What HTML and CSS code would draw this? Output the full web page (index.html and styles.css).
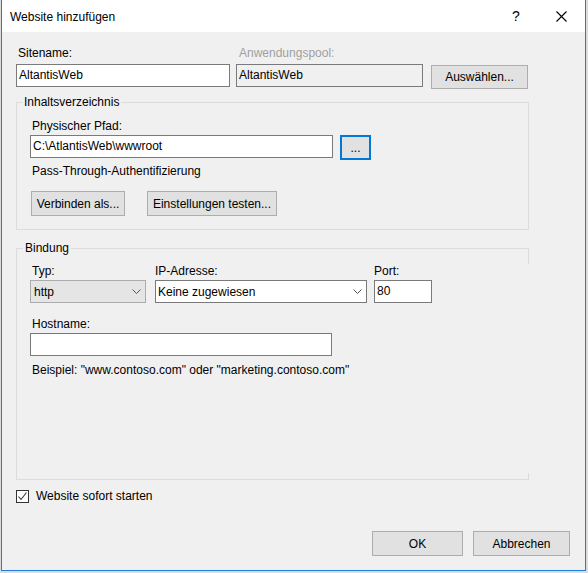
FILE: index.html
```html
<!DOCTYPE html>
<html lang="de">
<head>
<meta charset="utf-8">
<title>Website hinzufügen</title>
<link rel="stylesheet" href="styles.css">
</head>
<body>
<div class="window">
  <div class="titlebar">
    <span class="title">Website hinzufügen</span>
    <span class="help">?</span>
    <span class="close"><svg width="11" height="11" viewBox="0 0 11 11"><path d="M0.5 0.5 L10.5 10.5 M10.5 0.5 L0.5 10.5" stroke="#000" stroke-width="1.1" fill="none"/></svg></span>
  </div>
  <div class="content">
    <div class="row-top">
      <div class="field f-site">
        <label class="lbl">Sitename:</label>
        <div class="input">AltantisWeb</div>
      </div>
      <div class="field f-pool">
        <label class="lbl disabled">Anwendungspool:</label>
        <div class="input readonly">AltantisWeb</div>
      </div>
      <button class="btn b-select">Auswählen...</button>
    </div>

    <fieldset class="group g-dir">
      <legend>Inhaltsverzeichnis</legend>
      <label class="lbl">Physischer Pfad:</label>
      <div class="path-row">
        <div class="input i-path">C:\AtlantisWeb\wwwroot</div>
        <button class="btn b-dots focused">...</button>
      </div>
      <div class="lbl auth">Pass-Through-Authentifizierung</div>
      <div class="btn-row">
        <button class="btn b-connect">Verbinden als...</button>
        <button class="btn b-test">Einstellungen testen...</button>
      </div>
    </fieldset>

    <fieldset class="group g-bind">
      <legend>Bindung</legend>
      <div class="bind-row">
        <div class="field f-type">
          <label class="lbl">Typ:</label>
          <div class="select gray"><span>http</span><svg class="chev" width="9" height="5" viewBox="0 0 9 5"><path d="M0.5 0.5 L4.5 4.5 L8.5 0.5" stroke="#555" fill="none"/></svg></div>
        </div>
        <div class="field f-ip">
          <label class="lbl">IP-Adresse:</label>
          <div class="select"><span>Keine zugewiesen</span><svg class="chev" width="9" height="5" viewBox="0 0 9 5"><path d="M0.5 0.5 L4.5 4.5 L8.5 0.5" stroke="#555" fill="none"/></svg></div>
        </div>
        <div class="field f-port">
          <label class="lbl">Port:</label>
          <div class="input">80</div>
        </div>
      </div>
      <label class="lbl host-lbl">Hostname:</label>
      <div class="input i-host"></div>
      <div class="lbl example">Beispiel: "www.contoso.com" oder "marketing.contoso.com"</div>
    </fieldset>

    <div class="check-row">
      <span class="checkbox"><svg width="11" height="11" viewBox="0 0 11 11"><path d="M1.5 5.5 L4 8.5 L9.5 1.5" stroke="#333" stroke-width="1.1" fill="none"/></svg></span>
      <span class="check-label">Website sofort starten</span>
    </div>

    <div class="footer">
      <button class="btn b-ok">OK</button>
      <button class="btn b-cancel">Abbrechen</button>
    </div>
  </div>
</div>
</body>
</html>
```

FILE: styles.css
```css
html, body {
  margin: 0;
  padding: 0;
}
body {
  background: #dcdcdc;
  width: 588px;
  height: 573px;
  overflow: hidden;
  font-family: "Segoe UI", "Liberation Sans", Arial, sans-serif;
  font-size: 12px;
  color: #000;
}
.window {
  box-sizing: border-box;
  width: 585px;
  height: 571px;
  margin-left: 1px;
  border: 1px solid #1c7ed6;
  border-top: none;
  background: #f0f0f0;
  display: flex;
  flex-direction: column;
}
.titlebar {
  height: 32px;
  background: #fff;
  display: flex;
  align-items: center;
  padding-left: 8px;
  flex-shrink: 0;
}
.title {
  flex: 1;
  line-height: 16px;
  padding-top: 1px;
}
.help {
  font-size: 14px;
  width: 20px;
  margin-right: 24px;
}
.close {
  width: 11px;
  height: 11px;
  margin-right: 18px;
  display: flex;
}
.content {
  padding: 13px 0 0 14px;
}
.lbl {
  display: block;
  line-height: 16px;
  padding-left: 2px;
}
.disabled {
  color: #a0a0a0;
  padding-left: 3px;
}
.input {
  box-sizing: border-box;
  height: 23px;
  border: 1px solid #7a7a7a;
  background: #fff;
  line-height: 20px;
  padding-left: 2px;
  white-space: nowrap;
}
.input.readonly {
  background: #f0f0f0;
}
.row-top {
  display: flex;
  align-items: flex-start;
}
.row-top .lbl {
  margin-bottom: 3px;
}
.f-site { width: 214px; }
.f-pool { width: 187px; margin-left: 6px; }
.btn {
  box-sizing: border-box;
  height: 24px;
  background: #e1e1e1;
  border: 1px solid #adadad;
  font: inherit;
  color: #000;
  padding: 0;
  line-height: 20px;
}
.b-select {
  width: 97px;
  margin-left: 8px;
  margin-top: 20px;
}
.group {
  box-sizing: border-box;
  width: 513px;
  margin: 0;
  border: 1px solid #dcdcdc;
  padding: 0 0 0 13px;
}
.group legend {
  line-height: 16px;
  padding: 0 2px;
  margin-left: -8px;
}
.g-dir {
  margin-top: 5px;
  height: 136px;
  padding-top: 8px;
}
.path-row {
  display: flex;
  margin-top: 1px;
}
.i-path { width: 303px; }
.b-dots {
  width: 31px;
  height: 25px;
  margin-left: 7px;
}
.btn.focused {
  border: 2px solid #0078d7;
}
.auth {
  margin-top: 3px;
}
.btn-row {
  display: flex;
  margin-top: 12px;
}
.b-connect {
  width: 94px;
  height: 25px;
  margin-left: 1px;
}
.b-test {
  width: 130px;
  height: 25px;
  margin-left: 22px;
}
.g-bind {
  margin-top: 10px;
  height: 240px;
  padding-top: 7px;
  border-right: none;
  background:
    linear-gradient(#dcdcdc, #dcdcdc) right top / 1px 15px no-repeat,
    linear-gradient(#dcdcdc, #dcdcdc) right bottom / 1px 6px no-repeat;
}
.g-bind legend {
  margin-left: -7px;
}
.bind-row {
  display: flex;
  align-items: flex-start;
}
.bind-row .lbl {
  margin-bottom: 1px;
}
.f-type { width: 116px; }
.f-ip { width: 212px; margin-left: 9px; }
.f-port { width: 58px; margin-left: 7px; }
.f-port .lbl { padding-left: 0; }
.f-ip .lbl { padding-left: 0; }
.select {
  box-sizing: border-box;
  height: 23px;
  border: 1px solid #7a7a7a;
  background: #fff;
  display: flex;
  align-items: center;
  justify-content: space-between;
  padding: 0 4px 0 2px;
}
.select.gray {
  background: #e5e5e5;
  border-color: #acacac;
  padding-left: 3px;
}
.chev {
  display: block;
}
.host-lbl {
  margin-top: 13px;
  margin-bottom: 1px;
}
.i-host {
  width: 302px;
}
.example {
  margin-top: 6px;
}
.check-row {
  display: flex;
  align-items: center;
  margin-top: 9px;
  height: 14px;
}
.checkbox {
  box-sizing: border-box;
  width: 13px;
  height: 13px;
  border: 1px solid #333;
  background: #fff;
  display: flex;
  align-items: center;
  justify-content: center;
}
.check-label {
  margin-left: 7px;
  line-height: 16px;
}
.footer {
  display: flex;
  margin-top: 28px;
  margin-left: 356px;
}
.b-ok {
  width: 91px;
  height: 25px;
}
.b-cancel {
  width: 97px;
  height: 25px;
  margin-left: 10px;
}
```
